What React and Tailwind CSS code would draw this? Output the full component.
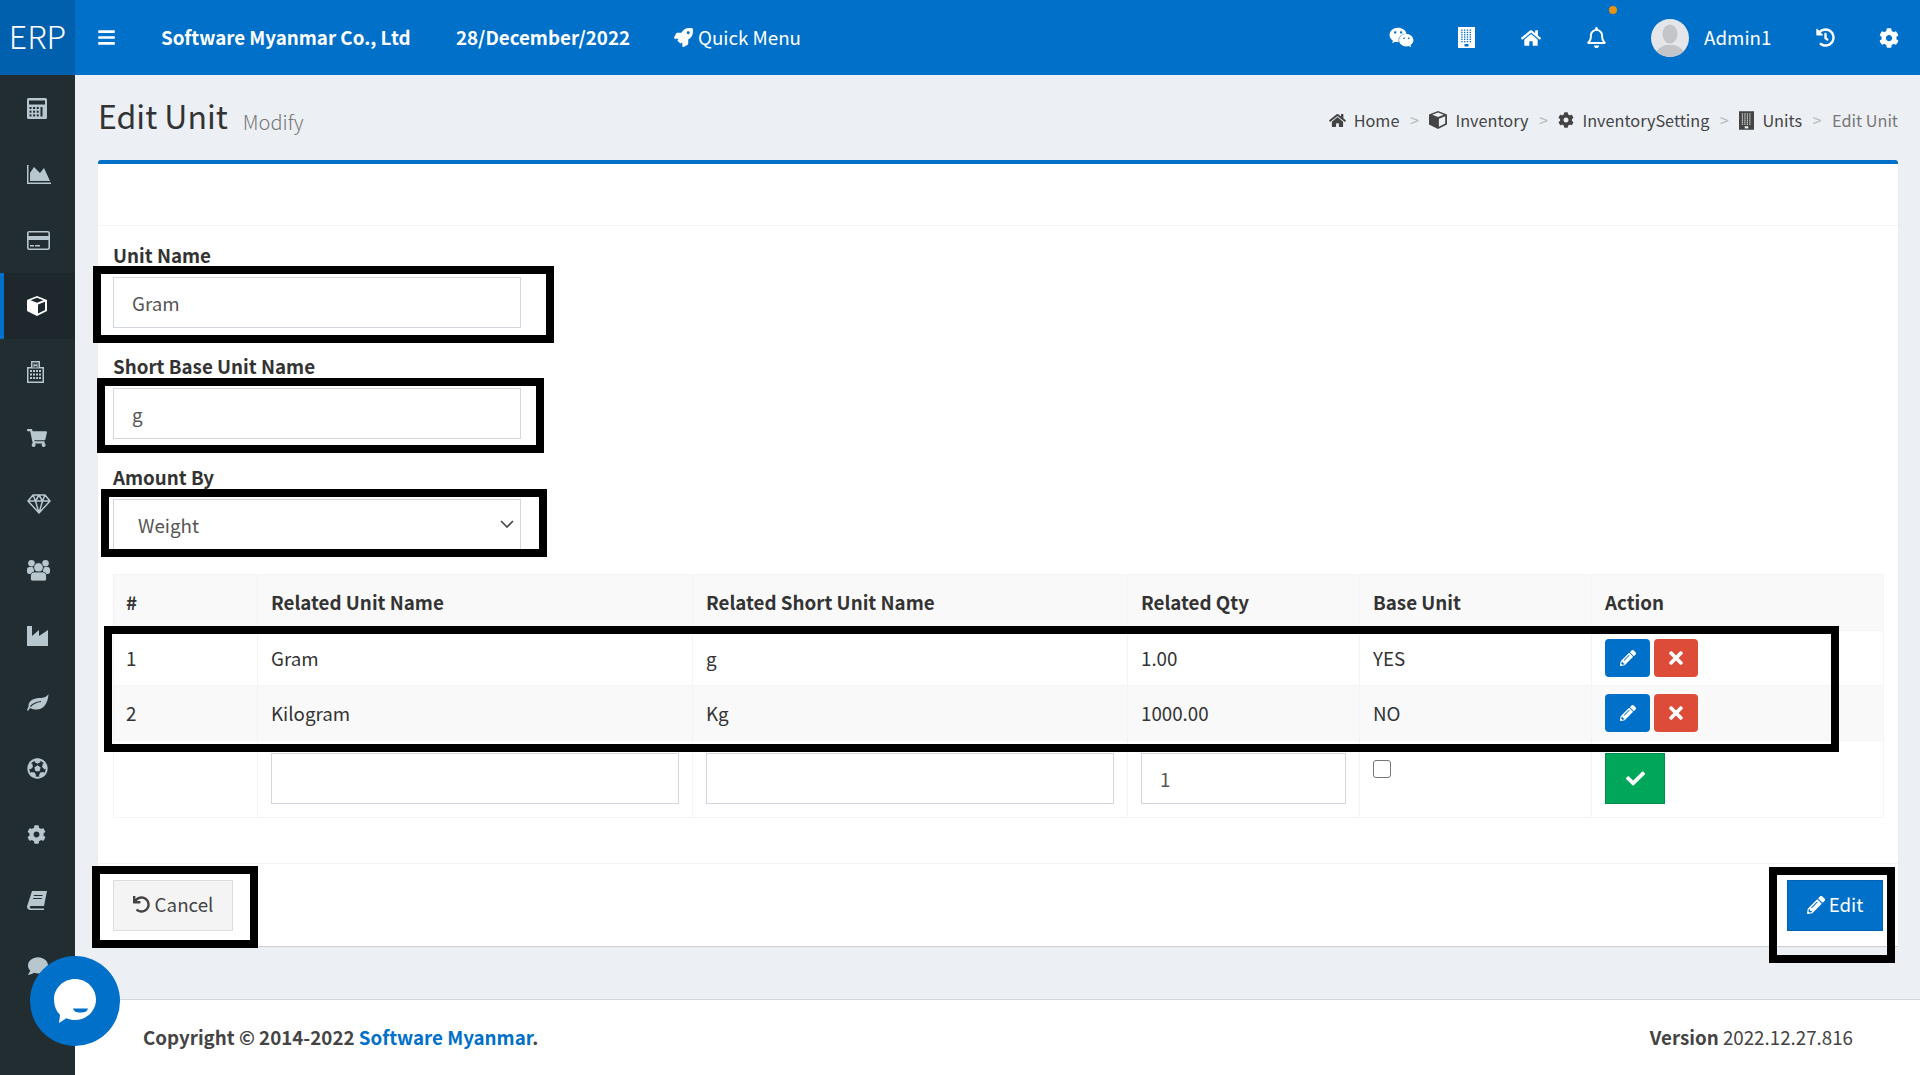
import {
  FaBars, FaRocket, FaWeixin, FaHome, FaRegBell, FaHistory, FaCog,
  FaShoppingCart, FaFutbol, FaComment, FaUndo, FaPencilAlt, FaTimes, FaCheck,
} from 'react-icons/fa'

const SIDE_BG = '#222d32'

function CalculatorIcon() {
  const cells = []
  for (let r = 0; r < 3; r++) {
    for (let c = 0; c < 3; c++) {
      cells.push(<rect key={`${r}${c}`} x={2.5 + c * 3.6} y={9 + r * 3.7} width="2" height="2" fill={SIDE_BG} />)
    }
  }
  return (
    <svg viewBox="0 0 20 21" className="w-[20px] h-[21px]" fill="currentColor">
      <rect width="20" height="21" rx="1.5" />
      <rect x="2" y="2.500" width="16" height="4" fill={SIDE_BG} />
      {cells}
      <rect x="13.500" y="9" width="2" height="9.500" fill={SIDE_BG} />
    </svg>
  )
}

function AreaChartIcon() {
  return (
    <svg viewBox="0 0 24 19" className="w-[24px] h-[19px]" fill="currentColor">
      <path d="M0 0h1.500v17.500H24V19H0z" />
      <path d="M3 16V8l4-6 6 6 4-5 6 13z" />
    </svg>
  )
}

function CardIcon() {
  return (
    <svg viewBox="0 0 23 19" className="w-[23px] h-[19px]" fill="currentColor">
      <rect x="0.800" y="0.800" width="21.400" height="17.400" rx="1.500" fill="none" stroke="currentColor" strokeWidth="1.600" />
      <rect x="1" y="5" width="21" height="4" />
      <rect x="3" y="14" width="4" height="1.500" />
      <rect x="8" y="14" width="5" height="1.500" />
    </svg>
  )
}

function CubeIcon({ className = 'w-[20px] h-[20px]' }) {
  return (
    <svg viewBox="0 0 20 20" className={className} fill="currentColor" fillRule="evenodd">
      <path d="M10 0l10 4v11l-10 5-10-5V4zM10 1.800L3.600 4.200 10 6.800l6.400-2.600zM11 8.600v8.900l7-3.500V5.800z" />
    </svg>
  )
}

function HospitalIcon() {
  const windows = []
  for (let r = 0; r < 3; r++) {
    for (let c = 0; c < 4; c++) {
      windows.push(<rect key={`${r}${c}`} x={3 + c * 3} y={9 + r * 3.500} width="2" height="2" />)
    }
  }
  return (
    <svg viewBox="0 0 17 22" className="w-[17px] h-[22px]" fill="currentColor">
      <path d="M4 0h9v6h4v16H0V6h4z" />
      <rect x="1.500" y="7.500" width="14" height="13" fill={SIDE_BG} />
      <rect x="5.500" y="1.500" width="6" height="5" fill={SIDE_BG} />
      <path d="M6.500 2.500h1v1h2v-1h1v4h-1v-1.500h-2v1.500h-1z" />
      {windows}
    </svg>
  )
}

function DiamondIcon() {
  return (
    <svg viewBox="0 0 24 20" className="w-[24px] h-[20px]" fill="none" stroke="currentColor" strokeWidth="1.500" strokeLinejoin="round">
      <path d="M6 1h12l5 6-11 12L1 7zM1 7h22M8.500 7L12 19l3.500-12M6 1l2.500 6L12 1l3.500 6L18 1" />
    </svg>
  )
}

function UsersIcon() {
  return (
    <svg viewBox="0 0 23 21" className="w-[23px] h-[21px]" fill="currentColor">
      <circle cx="4.500" cy="3.300" r="3.300" />
      <circle cx="18.500" cy="3.300" r="3.300" />
      <rect x="0" y="7" width="7" height="7" rx="2.500" />
      <rect x="16" y="7" width="7" height="7" rx="2.500" />
      <circle cx="11.500" cy="7.500" r="4.800" stroke={SIDE_BG} strokeWidth="0.800" />
      <path d="M3.500 16c0-2.500 1.500-4 4-4h8c2.500 0 4 1.500 4 4v3c0 1.200-1 2-2 2H5.500c-1 0-2-.8-2-2z" stroke={SIDE_BG} strokeWidth="0.800" />
    </svg>
  )
}

function LeafIcon() {
  return (
    <svg viewBox="0 0 22 17" className="w-[22px] h-[17px]" fill="currentColor">
      <path d="M21.500 0C21 10 16 15.500 10 15.500c-3 0-5-.5-7-1.500l-2 3-1-1 1.500-3.500C1 6 8 4 13 4c4 0 7-1.500 8.500-4z" />
      <path d="M3.500 12.500C6 9.500 10 8 14 7.500" fill="none" stroke={SIDE_BG} strokeWidth="1.200" />
    </svg>
  )
}

function BookIcon() {
  return (
    <svg viewBox="0 0 20 19" className="w-[20px] h-[19px]" fill="currentColor">
      <path d="M5 0h15l-3 15H4c-1 0-1.500.8-1.200 1.500.2.700.8 1 1.500 1H17V19H3.500C1.500 19 0 17.500 0 15.500z" />
      <path d="M6.800 4.500h8.700M6.100 7.500h8.700" stroke={SIDE_BG} strokeWidth="1.200" />
    </svg>
  )
}

function BuildingIcon({ className, hole }) {
  const dots = []
  for (let r = 0; r < 6; r++) {
    for (let c = 0; c < 4; c++) {
      dots.push(<rect key={`${r}${c}`} x={3.200 + c * 2.800} y={2.500 + r * 2.300} width="1.400" height="1.300" fill={hole} />)
    }
  }
  return (
    <svg viewBox="0 0 17 21" className={className} fill="currentColor">
      <rect width="17" height="21" />
      {dots}
      <rect x="6.500" y="17" width="4" height="2.500" fill={hole} />
    </svg>
  )
}

const SIDE_ITEMS = [
  { icon: <CalculatorIcon /> },
  { icon: <AreaChartIcon /> },
  { icon: <CardIcon /> },
  { icon: <CubeIcon />, active: true },
  { icon: <HospitalIcon /> },
  { icon: <FaShoppingCart className="w-[20px] h-[18px]" /> },
  { icon: <DiamondIcon /> },
  { icon: <UsersIcon /> },
  { icon: <svg viewBox="0 0 21 20" className="w-[21px] h-[20px]" fill="currentColor"><path d="M0 0h5v10l7-6v6l9-6v16H0z" /></svg> },
  { icon: <LeafIcon /> },
  { icon: <FaFutbol className="w-[21px] h-[21px]" /> },
  { icon: <FaCog className="w-[19px] h-[19px]" /> },
  { icon: <BookIcon /> },
  { icon: <FaComment className="w-[22px] h-[20px]" /> },
]

const inputClass = 'block h-[51px] border border-[#d2d6de] bg-white px-[18px] text-[18.75px] text-[#555] outline-none'

function Sidebar() {
  return (
    <aside className="w-[75px] shrink-0 bg-[#222d32] flex flex-col overflow-hidden">
      {SIDE_ITEMS.map((item, i) => (
        <div
          key={i}
          className={`h-[66px] shrink-0 flex items-center pl-[23px] border-l-4 ${item.active ? 'bg-[#1e282c] border-[#0070c9] text-white' : 'border-transparent text-[#b8c7ce]'}`}
        >
          {item.icon}
        </div>
      ))}
    </aside>
  )
}

function Header() {
  return (
    <header className="h-[75px] shrink-0 flex bg-[#0070c9] text-white">
      <div className="w-[75px] shrink-0 bg-[#0060ad] flex items-center justify-center pb-[6px] text-[32px] font-light">ERP</div>
      <FaBars className="w-[19px] h-[19px] ml-[22px] self-center" />
      <div className="flex items-center ml-[45px] text-[18.75px] font-bold w-[295px]">Software Myanmar Co., Ltd</div>
      <div className="flex items-center text-[18.75px] font-bold w-[218px]">28/December/2022</div>
      <div className="flex items-center gap-[5px] text-[18.75px]">
        <FaRocket className="w-[19px] h-[19px]" />
        Quick Menu
      </div>
      <div className="ml-auto flex items-center">
        <FaWeixin className="w-[25px] h-[25px] mr-[44px]" />
        <BuildingIcon className="w-[17px] h-[21px] mr-[46px]" hole="#0070c9" />
        <FaHome className="w-[20px] h-[18px] mr-[45px]" />
        <div className="relative mr-[44px]">
          <FaRegBell className="w-[21px] h-[21px]" />
          <span className="absolute left-[23px] top-[-21px] w-[8px] h-[8px] rounded-full bg-[#e8920c]" />
        </div>
        <div className="w-[38px] h-[38px] rounded-full bg-[#e4e6ea] overflow-hidden mr-[15px]">
          <svg viewBox="0 0 38 38" className="w-full h-full">
            <ellipse cx="19" cy="15" rx="7.500" ry="9.500" fill="#c3c5c9" />
            <path d="M4 38c0-8 7-11 11-12l8 0c4 1 11 4 11 12z" fill="#c3c5c9" />
          </svg>
        </div>
        <span className="text-[18.75px] w-[68px] mr-[44px]">Admin1</span>
        <FaHistory className="w-[19px] h-[19px] mr-[44px]" />
        <FaCog className="w-[20px] h-[20px] mr-[21px]" />
      </div>
    </header>
  )
}

function Breadcrumb() {
  const items = [
    { icon: <FaHome className="w-[17px] h-[15px] mr-[8px]" />, label: 'Home' },
    { icon: <CubeIcon className="w-[18px] h-[18px] mr-[8px]" />, label: 'Inventory' },
    { icon: <FaCog className="w-[16px] h-[16px] mr-[8px]" />, label: 'InventorySetting' },
    { icon: <BuildingIcon className="w-[15px] h-[19px] mr-[8px]" hole="#ecf0f5" />, label: 'Units' },
  ]
  return (
    <div className="flex items-center pt-[5px] text-[16.25px] text-[#444]">
      {items.map(({ icon, label }) => (
        <span key={label} className="flex items-center">
          {icon}
          {label}
          <span className="text-[#bbb] mx-[10.5px]">&gt;</span>
        </span>
      ))}
      <span className="text-[#777]">Edit Unit</span>
    </div>
  )
}

function FormField({ label, children, className = '' }) {
  return (
    <div className={className}>
      <label className="block h-[22px] leading-[22px] mb-[11px] text-[18.75px] font-bold text-[#333]">{label}</label>
      {children}
    </div>
  )
}

function RowActions() {
  return (
    <div className="flex gap-[4px]">
      <button className="w-[45px] h-[38px] rounded-[4px] bg-[#0070c9] text-white flex items-center justify-center">
        <FaPencilAlt className="w-[16px] h-[16px]" />
      </button>
      <button className="w-[44px] h-[38px] rounded-[4px] bg-[#dd4b39] text-white flex items-center justify-center">
        <FaTimes className="w-[14px] h-[20px]" />
      </button>
    </div>
  )
}

function UnitTable() {
  const thClass = 'border border-[#f4f4f4] px-[13px] text-left font-bold'
  const tdClass = 'border border-[#f4f4f4] px-[13px]'
  const rows = [
    ['1', 'Gram', 'g', '1.00', 'YES'],
    ['2', 'Kilogram', 'Kg', '1000.00', 'NO'],
  ]
  return (
    <table className="w-[1770px] table-fixed border-collapse text-[18.75px] text-[#333]">
      <colgroup>
        <col className="w-[144px]" />
        <col className="w-[435px]" />
        <col className="w-[435px]" />
        <col className="w-[232px]" />
        <col className="w-[232px]" />
        <col className="w-[292px]" />
      </colgroup>
      <thead>
        <tr className="h-[56px] bg-[#f9f9f9]">
          <th className={`${thClass} pl-[12px]`}>#</th>
          <th className={thClass}>Related Unit Name</th>
          <th className={thClass}>Related Short Unit Name</th>
          <th className={thClass}>Related Qty</th>
          <th className={thClass}>Base Unit</th>
          <th className={thClass}>Action</th>
        </tr>
      </thead>
      <tbody>
        {rows.map((row, i) => (
          <tr key={row[0]} className={`h-[55px] ${i % 2 ? 'bg-[#f9f9f9]' : 'bg-white'}`}>
            {row.map((cell, j) => (
              <td key={j} className={j === 0 ? `${tdClass} pl-[12px]` : tdClass}>{cell}</td>
            ))}
            <td className={tdClass}><RowActions /></td>
          </tr>
        ))}
        <tr className="h-[77px] align-top">
          <td className={tdClass} />
          <td className={`${tdClass} pt-[12px]`}><input className={`${inputClass} w-full`} /></td>
          <td className={`${tdClass} pt-[12px]`}><input className={`${inputClass} w-full`} /></td>
          <td className={`${tdClass} pt-[12px]`}><input className={`${inputClass} w-full`} defaultValue="1" /></td>
          <td className={`${tdClass} pt-[19px]`}>
            <span className="block w-[18px] h-[18px] border-[1.5px] border-[#767676] rounded-[3px] bg-white" />
          </td>
          <td className={`${tdClass} pt-[12px]`}>
            <button className="w-[60px] h-[51px] bg-[#00a65a] border border-[#008d4c] text-white flex items-center justify-center">
              <FaCheck className="w-[19px] h-[19px]" />
            </button>
          </td>
        </tr>
      </tbody>
    </table>
  )
}

function Card() {
  return (
    <section className="mx-[22px] ml-[23px] bg-white border-t-4 border-[#0070c9] rounded-t-[3px] shadow-[0_1px_1px_rgba(0,0,0,0.15)]">
      <div className="h-[62px] border-b border-[#f4f4f4]" />
      <div className="px-[15px] pt-[18px] pb-[45px] border-b border-[#f4f4f4]">
        <FormField label="Unit Name" className="mb-[27px]">
          <input className={`${inputClass} w-[408px]`} defaultValue="Gram" />
        </FormField>
        <FormField label="Short Base Unit Name" className="mb-[27px]">
          <input className={`${inputClass} w-[408px]`} defaultValue="g" />
        </FormField>
        <FormField label="Amount By" className="mb-[24px]">
          <div className="relative w-[408px]">
            <select className={`${inputClass} w-full appearance-none pl-[24px] pt-[2px]`} defaultValue="Weight">
              <option>Weight</option>
            </select>
            <svg viewBox="0 0 14 8" className="absolute right-[7px] top-[21px] w-[14px] h-[8px] text-[#444]" fill="none" stroke="currentColor" strokeWidth="1.600">
              <path d="M1 1l6 6 6-6" />
            </svg>
          </div>
        </FormField>
        <UnitTable />
      </div>
      <div className="h-[82px] px-[15px] pt-[16px] flex justify-between items-start">
        <button className="w-[120px] h-[51px] pb-[2px] bg-[#f4f4f4] border border-[#ddd] text-[#444] text-[18.75px] flex items-center justify-center gap-[5px]">
          <FaUndo className="w-[17px] h-[17px]" />
          Cancel
        </button>
        <button className="w-[96px] h-[51px] pb-[2px] bg-[#0070c9] border border-[#0062b0] text-white text-[18.75px] flex items-center justify-center gap-[4px]">
          <FaPencilAlt className="w-[18px] h-[18px]" />
          Edit
        </button>
      </div>
    </section>
  )
}

// black boxes someone drew on the screenshot
const MARKS = [
  'left-[93px] top-[266px] w-[461px] h-[77px]',
  'left-[97px] top-[378px] w-[447px] h-[75px]',
  'left-[101px] top-[489px] w-[446px] h-[68px]',
  'left-[104px] top-[626px] w-[1735px] h-[126px]',
  'left-[92px] top-[866px] w-[166px] h-[82px]',
  'left-[1769px] top-[867px] w-[126px] h-[96px]',
]

export default function App() {
  return (
    <div className="relative w-[1920px] h-[1075px] overflow-hidden flex flex-col bg-[#ecf0f5] font-['Noto_Sans_CJK_SC',sans-serif]">
      <Header />
      <div className="flex flex-1 min-h-0">
        <Sidebar />
        <main className="flex-1 flex flex-col min-w-0">
          <div className="h-[85px] shrink-0 pl-[23px] pr-[22px] flex items-center justify-between">
            <div className="flex items-baseline gap-[15px]">
              <h1 className="text-[32px] leading-none text-[#333]">Edit Unit</h1>
              <span className="text-[20px] font-light text-[#777] translate-y-[1px]">Modify</span>
            </div>
            <Breadcrumb />
          </div>
          <Card />
          <footer className="mt-auto h-[76px] shrink-0 bg-white border-t border-[#d2d6de] pl-[68px] pr-[67px] flex items-center justify-between text-[18.75px] text-[#444]">
            <div className="font-bold">
              Copyright © 2014-2022 <span className="text-[#0070c9]">Software Myanmar</span>.
            </div>
            <div><span className="font-bold">Version</span> 2022.12.27.816</div>
          </footer>
        </main>
      </div>
      {MARKS.map((m) => (
        <div key={m} className={`absolute border-8 border-black pointer-events-none ${m}`} />
      ))}
      <div className="absolute left-[30px] top-[956px] w-[90px] h-[90px] rounded-full bg-[#0070c9] flex items-center justify-center">
        <svg viewBox="0 0 44 46" className="w-[44px] h-[46px]">
          <path d="M22 1c11.600 0 21 9 21 20.500S33.600 42 22 42c-3 0-6-.6-8.700-1.800L6 45l1-8.200C3 33 1 27.500 1 21.500 1 10 10.400 1 22 1z" fill="#fff" />
          <path d="M20 30.500h15c-1 3-3 4-7.500 4s-6.500-1-7.500-4z" fill="#0070c9" />
        </svg>
      </div>
    </div>
  )
}
